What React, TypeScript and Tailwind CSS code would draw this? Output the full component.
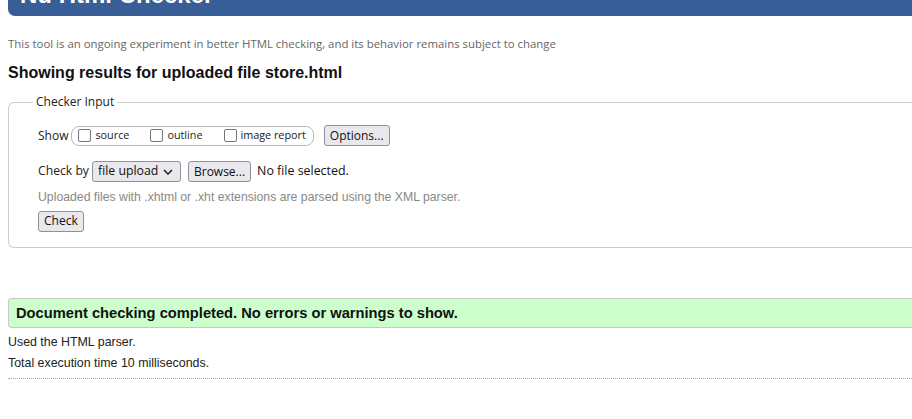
import React from "react";

const ui = { fontFamily: '"Open Sans", "Noto Sans", sans-serif' };
const arial = { fontFamily: '"Liberation Sans", Arial, sans-serif' };

function Box({ label }: { label: string }) {
  return (
    <label className="flex items-center gap-[4px]">
      <span className="inline-block h-[13px] w-[13px] rounded-[2px] border-[1.5px] border-[#767676] bg-white" />
      <span className="text-[10.8px] text-[#222]">{label}</span>
    </label>
  );
}

function Btn({ children, className = "" }: { children: React.ReactNode; className?: string }) {
  return (
    <button
      className={`h-[21px] rounded-[3px] border border-[#8f8f9d] bg-[#e9e9ed] px-[5px] text-[12px] leading-none text-[#111] ${className}`}
      style={ui}
    >
      {children}
    </button>
  );
}

export default function App() {
  return (
    <div className="min-h-screen overflow-hidden bg-white pl-[8px] text-[#222]" style={arial}>
      <header className="h-[16px] overflow-hidden rounded-bl-[7px] bg-[#375e97]">
        <h1 className="ml-[12px] mt-[-17px] text-[24px] font-bold leading-[24px] text-white">
          Nu Html Checker
        </h1>
      </header>

      <p className="mt-[20px] text-[11.4px] leading-[16px] text-[#666]" style={ui}>
        This tool is an ongoing experiment in better HTML checking, and its behavior remains subject to change
      </p>

      <h2 className="mt-[11px] text-[16px] font-bold leading-[19px] text-[#111]">
        Showing results for uploaded file store.html
      </h2>

      <fieldset className="mt-[12px] rounded-l-[6px] border border-r-0 border-[#cccccc] pb-[15px] pl-[29px]">
        <legend className="ml-[-5px] px-[3px] text-[12px] leading-[16px] text-[#222]" style={ui}>
          Checker Input
        </legend>

        <div className="mt-[15px] flex items-center" style={ui}>
          <span className="text-[12px] text-[#222]">Show</span>
          <div className="ml-[3px] flex h-[20px] items-center gap-[21px] rounded-[8px] border border-[#bbbbbb] pl-[6px] pr-[7px]">
            <Box label="source" />
            <Box label="outline" />
            <Box label="image report" />
          </div>
          <Btn className="ml-[10px]">Options...</Btn>
        </div>

        <div className="mt-[15px] flex items-center" style={ui}>
          <span className="text-[12.2px] text-[#222]">Check by</span>
          <div className="ml-[3px] flex h-[21px] w-[89px] items-center justify-between rounded-[3px] border border-[#8f8f9d] bg-[#e9e9ed] pl-[5px] pr-[7px] text-[12.3px] text-[#111]">
            <span>file upload</span>
            <svg width="10" height="6" viewBox="0 0 10 6" fill="none">
              <path d="M1 1l4 4 4-4" stroke="#222" strokeWidth="1.5" />
            </svg>
          </div>
          <Btn className="ml-[7px]">Browse...</Btn>
          <span className="ml-[6px] text-[12.4px] text-[#111]">No file selected.</span>
        </div>

        <p className="mt-[7px] text-[12.25px] leading-[16px] text-[#888]">
          Uploaded files with .xhtml or .xht extensions are parsed using the XML parser.
        </p>

        <div className="mt-[3px]">
          <Btn>Check</Btn>
        </div>
      </fieldset>

      <div className="mt-[50px] flex h-[30px] items-center rounded-l-[4px] border border-r-0 border-[#c8c8c8] bg-[#ccffcc] pl-[7px]">
        <span className="text-[14.7px] font-bold text-[#111]">
          Document checking completed. No errors or warnings to show.
        </span>
      </div>

      <p className="mt-[7px] text-[12.4px] leading-[15px] text-[#222]">Used the HTML parser.</p>
      <p className="mt-[6px] text-[12.4px] leading-[15px] text-[#222]">Total execution time 10 milliseconds.</p>
      <div className="mt-[7px] border-t border-dotted border-[#aaaaaa]" />
    </div>
  );
}
